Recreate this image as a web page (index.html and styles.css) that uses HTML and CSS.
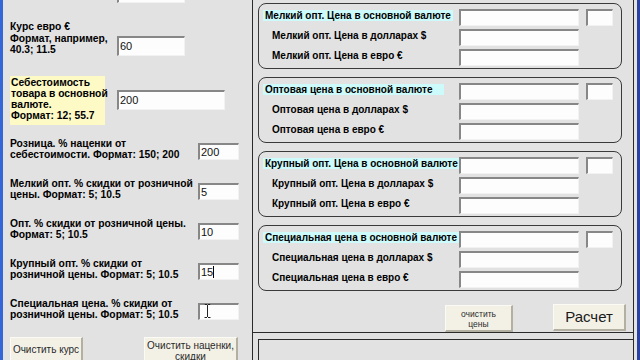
FILE: index.html
```html
<!DOCTYPE html>
<html>
<head>
<meta charset="utf-8">
<link rel="stylesheet" href="styles.css">
</head>
<body>
<div class="win">
  <div class="edge-l"></div>
  <div class="left">
    <div class="row r0"><div class="field f-a r0f"></div></div>
    <div class="row ra">
      <div class="lbl la">Курс евро €<br>Формат, например,<br>40.3; 11.5</div>
      <div class="field f-a">60</div>
    </div>
    <div class="row rb">
      <div class="lbl lb">Себестоимость<br>товара в основной<br>валюте.<br>Формат: 12; 55.7</div>
      <div class="field f-b">200</div>
    </div>
    <div class="row rs">
      <div class="lbl ls">Розница. % наценки от<br>себестоимости. Формат: 150; 200</div>
      <div class="field f-s">200</div>
    </div>
    <div class="row rs">
      <div class="lbl ls">Мелкий опт. % скидки от розничной<br>цены. Формат: 5; 10.5</div>
      <div class="field f-s">5</div>
    </div>
    <div class="row rs">
      <div class="lbl ls">Опт. % скидки от розничной цены.<br>Формат: 5; 10.5</div>
      <div class="field f-s">10</div>
    </div>
    <div class="row rs">
      <div class="lbl ls">Крупный опт. % скидки от<br>розничной цены. Формат: 5; 10.5</div>
      <div class="field f-s">15<span class="caret"></span></div>
    </div>
    <div class="row rs">
      <div class="lbl ls">Специальная цена. % скидки от<br>розничной цены. Формат: 5; 10.5</div>
      <div class="field f-s"><svg class="ibeam" width="7" height="14" viewBox="0 0 7 14"><path d="M0.5 0.5h2.5M4 0.5h2.5M3.5 1v12M0.5 13.5h2.5M4 13.5h2.5" stroke="#fff" stroke-width="2.2" fill="none"/><path d="M0.5 0.5h2.5M4 0.5h2.5M3.5 1v12M0.5 13.5h2.5M4 13.5h2.5" stroke="#222" stroke-width="1" fill="none"/></svg></div>
    </div>
    <div class="lbtns">
      <div class="btn b-kurs">Очистить курс</div>
      <div class="btn b-nac">Очистить наценки,<br>скидки</div>
    </div>
  </div>
  <div class="right">
    <div class="rp">
      <div class="grp">
        <div class="grow"><div class="gl"><span class="title">Мелкий опт. Цена в основной валюте</span></div><div class="field f-w"></div><div class="field f-n"></div></div>
        <div class="grow"><div class="gl sub">Мелкий опт. Цена в долларах $</div><div class="field f-w"></div></div>
        <div class="grow"><div class="gl sub">Мелкий опт. Цена в евро €</div><div class="field f-w"></div></div>
      </div>
      <div class="grp">
        <div class="grow"><div class="gl"><span class="title">Оптовая цена в основной валюте</span></div><div class="field f-w"></div><div class="field f-n"></div></div>
        <div class="grow"><div class="gl sub">Оптовая цена в долларах $</div><div class="field f-w"></div></div>
        <div class="grow"><div class="gl sub">Оптовая цена в евро €</div><div class="field f-w"></div></div>
      </div>
      <div class="grp">
        <div class="grow"><div class="gl"><span class="title">Крупный опт. Цена в основной валюте</span></div><div class="field f-w"></div><div class="field f-n"></div></div>
        <div class="grow"><div class="gl sub">Крупный опт. Цена в долларах $</div><div class="field f-w"></div></div>
        <div class="grow"><div class="gl sub">Крупный опт. Цена в евро €</div><div class="field f-w"></div></div>
      </div>
      <div class="grp">
        <div class="grow"><div class="gl"><span class="title">Специальная цена в основной валюте</span></div><div class="field f-w"></div><div class="field f-n"></div></div>
        <div class="grow"><div class="gl sub">Специальная цена в долларах $</div><div class="field f-w"></div></div>
        <div class="grow"><div class="gl sub">Специальная цена в евро €</div><div class="field f-w"></div></div>
      </div>
      <div class="rbtns">
        <div class="btn b-clr">очистить<br>цены</div>
        <div class="btn b-calc">Расчет</div>
      </div>
    </div>
    <div class="rbottom"><div class="rb-box"></div></div>
  </div>
  <div class="gap-r"></div>
  <div class="edge-r"></div>
</div>
</body>
</html>
```
FILE: styles.css
```css
html, body {
  margin: 0;
  padding: 0;
}
body {
  width: 640px;
  height: 360px;
  overflow: hidden;
  background: #e2e2e2;
  font-family: "Liberation Sans", Arial, sans-serif;
  color: #000;
}
.win {
  display: flex;
  height: 360px;
}
.edge-l {
  flex: none;
  width: 3px;
  background: #3466d8;
}
.left {
  flex: none;
  width: 249px;
  padding-left: 7px;
  box-sizing: border-box;
}
.row {
  display: flex;
  align-items: flex-start;
}
.lbl {
  font-weight: bold;
  font-size: 10.3px;
  line-height: 11px;
  white-space: nowrap;
  flex: none;
}
.field {
  flex: none;
  box-sizing: border-box;
  background: #fdfdfd;
  border-top: 2px solid #878787;
  border-left: 2px solid #878787;
  border-right: 1px solid #f2f2f2;
  border-bottom: 1px solid #f2f2f2;
  font-size: 11px;
  padding-left: 1px;
  color: #111;
  white-space: nowrap;
}
.r0 {
  height: 3px;
}
.r0f {
  margin-left: 107px;
  margin-top: -17px;
}
.f-a {
  width: 68px;
  height: 20px;
  line-height: 17px;
}
.ra {
  margin-top: 18px;
}
.la {
  width: 107px;
  line-height: 11.5px;
}
.ra .field {
  margin-top: 15px;
}
.rb {
  margin-top: 20px;
}
.lb {
  width: 95px;
  height: 49px;
  box-sizing: border-box;
  padding: 1px 0 0 1px;
  margin-right: 12px;
  background: #fdfac6;
}
.f-b {
  width: 108px;
  height: 20px;
  line-height: 17px;
  margin-top: 14px;
}
.rs {
  margin-top: 17.5px;
}
.rb + .rs {
  margin-top: 12.5px;
}
.ls {
  width: 188px;
}
.f-s {
  width: 41px;
  height: 17px;
  line-height: 14px;
  margin-top: 5.5px;
}
.caret {
  display: inline-block;
  width: 1px;
  height: 12px;
  background: #000;
  vertical-align: -2px;
}
.ibeam {
  display: block;
  margin-left: 3px;
  margin-top: -1px;
}
.lbtns {
  display: flex;
  align-items: flex-start;
  margin-top: 17px;
}
.btn {
  flex: none;
  box-sizing: border-box;
  background: #f3f1e6;
  border-top: 1px solid #fbfaf5;
  border-left: 1px solid #fbfaf5;
  border-right: 2px solid #b3b0a2;
  border-bottom: 2px solid #b3b0a2;
  color: #2a2a2a;
  text-align: center;
  white-space: nowrap;
}
.b-kurs {
  width: 73px;
  height: 27px;
  font-size: 10px;
  line-height: 24px;
}
.b-nac {
  width: 94px;
  height: 32px;
  margin-left: 61px;
  font-size: 10px;
  line-height: 11px;
  padding-top: 2px;
}
.right {
  flex: none;
  width: 382px;
  box-sizing: border-box;
  border-left: 1px solid #2b2b2b;
  border-right: 1px solid #2b2b2b;
  display: flex;
  flex-direction: column;
}
.rp {
  height: 344px;
  box-sizing: border-box;
  padding: 3px 0 0 5px;
  border-bottom: 1px solid #2b2b2b;
}
.grp {
  width: 364px;
  height: 66px;
  box-sizing: border-box;
  border: 1px solid #3a3a3a;
  border-radius: 8px;
  padding: 5px 0 2px 4px;
}
.grp + .grp {
  margin-top: 8px;
}
.grow {
  display: flex;
  align-items: flex-start;
  height: 17px;
}
.grow + .grow {
  margin-top: 3px;
}
.gl {
  flex: none;
  width: 196px;
  font-weight: bold;
  font-size: 10px;
  line-height: 11px;
  margin-top: 1px;
  white-space: nowrap;
}
.title {
  display: inline-block;
  min-width: 177px;
  padding: 0 2px;
  background: #cdfafa;
}
.sub {
  padding-left: 9px;
  box-sizing: border-box;
}
.f-w {
  width: 120px;
  height: 17px;
}
.f-n {
  width: 27px;
  height: 17px;
  margin-left: 7px;
}
.rbtns {
  display: flex;
  align-items: flex-start;
  margin-top: 13px;
}
.b-clr {
  width: 68px;
  height: 27px;
  margin-left: 187px;
  margin-top: 1px;
  font-size: 8.5px;
  line-height: 10px;
  padding-top: 3px;
}
.b-calc {
  width: 73px;
  height: 27px;
  margin-left: 40px;
  font-size: 15px;
  line-height: 24px;
  color: #1a1a1a;
}
.rbottom {
  flex: 1;
  padding: 6px 0 0 5px;
}
.rb-box {
  height: 30px;
  border-top: 1px solid #2b2b2b;
  border-left: 1px solid #2b2b2b;
}
.gap-r {
  flex: none;
  width: 3px;
}
.edge-r {
  flex: none;
  width: 3px;
  background: #2942a3;
}
```
